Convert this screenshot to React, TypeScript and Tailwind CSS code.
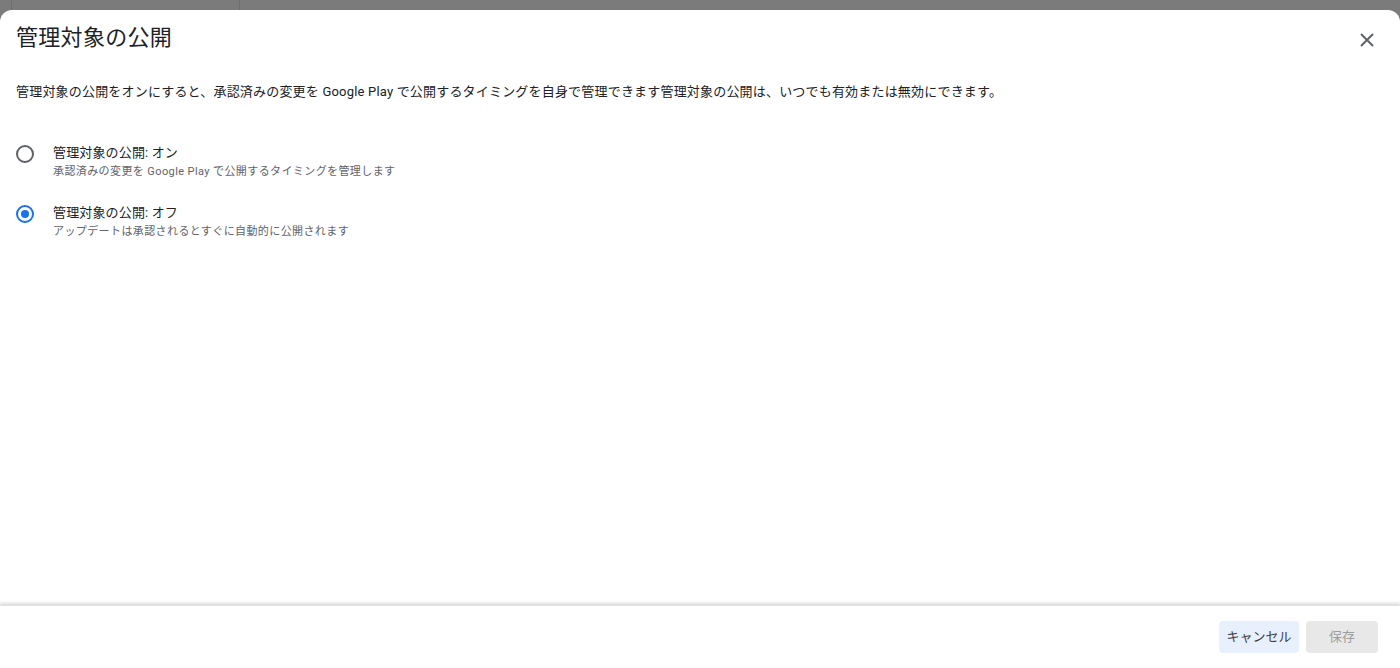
import React from "react";

const font = { fontFamily: 'Roboto, "Noto Sans CJK JP", sans-serif' };

function Radio({ checked }: { checked: boolean }) {
  return (
    <div className="w-[20px] h-[20px] flex items-center justify-center shrink-0">
      <div
        className={
          "w-[18px] h-[18px] rounded-full border-2 flex items-center justify-center " +
          (checked ? "border-[#1a73e8]" : "border-[#5f6368]")
        }
      >
        {checked && <div className="w-[8px] h-[8px] rounded-full bg-[#1a73e8]" />}
      </div>
    </div>
  );
}

function Option({ checked, title, sub }: { checked: boolean; title: string; sub: string }) {
  return (
    <div className="flex items-start">
      <div className="pl-[15px] pt-[1px] w-[53px]">
        <Radio checked={checked} />
      </div>
      <div className="flex flex-col">
        <div className="text-[13px] leading-[20px] text-[#202124] tracking-[0.15px]">{title}</div>
        <div className="text-[11px] leading-[16px] text-[#5f6368] mt-[1px] tracking-[0.4px]">{sub}</div>
      </div>
    </div>
  );
}

export default function App() {
  return (
    <div className="w-[1400px] h-[668px] bg-[#7b7b7b] flex flex-col relative overflow-hidden" style={font}>
      <div className="h-[10px] flex shrink-0">
        <div className="w-[12px] border-r border-[#6e6e6e]" />
        <div className="w-[228px] border-r border-[#6e6e6e]" />
      </div>
      <div className="flex-1 bg-white rounded-t-[12px] flex flex-col">
        <div className="flex items-center justify-between h-[56px] pl-[16px] pr-[26px]">
          <div className="text-[22px] leading-[28px] text-[#202124] tracking-[0.3px]">管理対象の公開</div>
          <svg width="14" height="14" viewBox="0 0 14 14" className="mt-[4px]">
            <path d="M1 1 L13 13 M13 1 L1 13" stroke="#5f6368" strokeWidth="2" />
          </svg>
        </div>
        <div className="px-[16px] pt-[16px] text-[13px] leading-[20px] text-[#202124] tracking-[0.19px]">
          管理対象の公開をオンにすると、承認済みの変更を Google Play で公開するタイミングを自身で管理できます管理対象の公開は、いつでも有効または無効にできます。
        </div>
        <div className="flex flex-col gap-[23px] pt-[41px]">
          <Option
            checked={false}
            title="管理対象の公開: オン"
            sub="承認済みの変更を Google Play で公開するタイミングを管理します"
          />
          <Option
            checked={true}
            title="管理対象の公開: オフ"
            sub="アップデートは承認されるとすぐに自動的に公開されます"
          />
        </div>
        <div className="flex-1" />
        <div className="h-[63px] flex items-start justify-end gap-[7px] pr-[22px] pt-[15px] shadow-[0_-2px_3px_rgba(0,0,0,0.15)] border-t border-[#e0e0e0]">
          <button className="h-[32px] w-[80px] rounded-[4px] bg-[#e8f0fe] text-[13px] text-[#3c4043]">キャンセル</button>
          <button className="h-[32px] w-[72px] rounded-[4px] bg-[#e8e8e8] text-[13px] text-[#9e9e9e]">保存</button>
        </div>
      </div>
    </div>
  );
}
